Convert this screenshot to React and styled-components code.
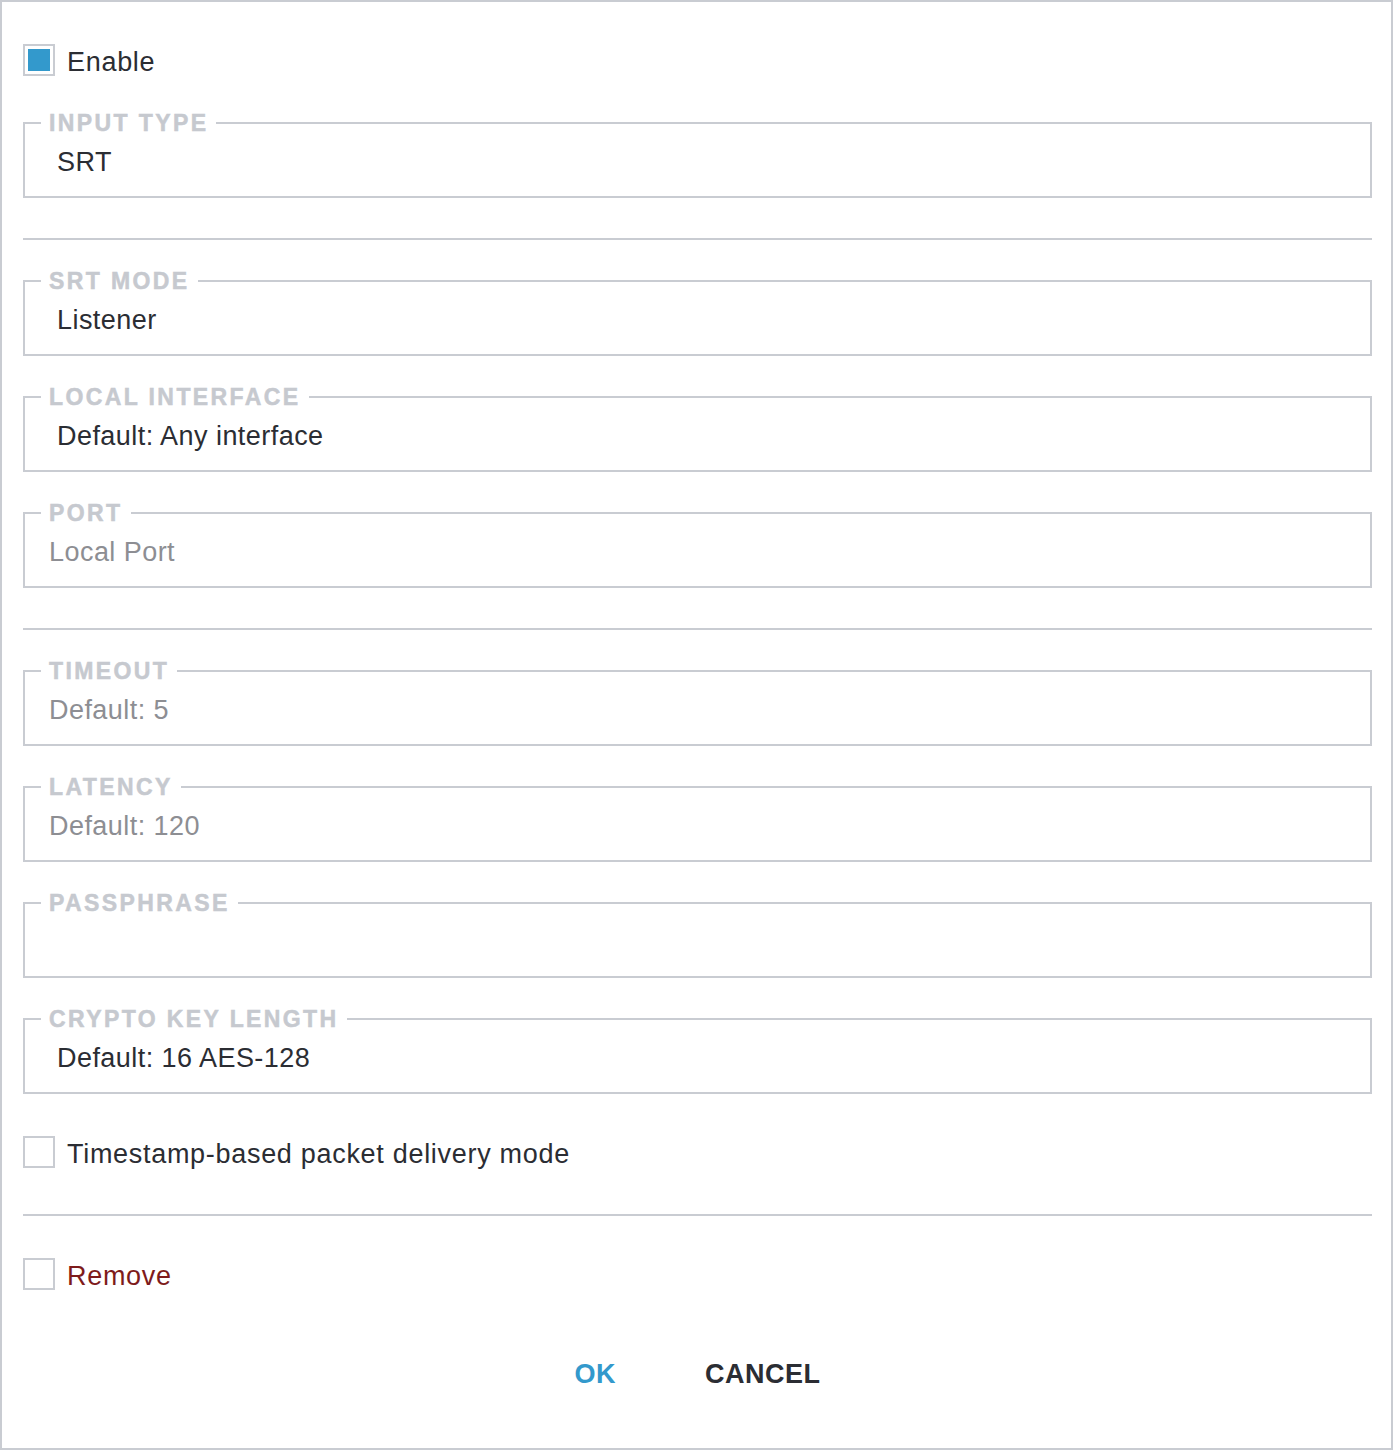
import React from 'react';
import styled, { createGlobalStyle } from 'styled-components';

const Global = createGlobalStyle`
  html, body { margin: 0; padding: 0; background: #fff; }
  body { font-family: "Liberation Sans", Arial, Helvetica, sans-serif; }
  * { box-sizing: border-box; }
`;

const LINE = '#c9ccd2';

const Frame = styled.div`
  width: 1393px;
  height: 1450px;
  border: 2px solid ${LINE};
  padding: 42px 19px 0 21px;
  display: flex;
  flex-direction: column;
  background: #fff;
`;

const CheckRow = styled.label`
  display: flex;
  align-items: center;
  gap: 12px;
  height: 32px;
  margin-top: ${(p) => p.$mt || 0}px;
  font-size: 27px;
  line-height: 32px;
  letter-spacing: 0.7px;
  color: ${(p) => (p.$danger ? '#7e1b1b' : '#2b2d33')};
  cursor: pointer;
`;

const CheckText = styled.span`
  margin-top: 4px;
  white-space: nowrap;
`;

const Box = styled.span`
  flex: none;
  display: flex;
  width: 32px;
  height: 32px;
  border: 2px solid ${LINE};
  padding: 3px;
  background: #fff;
  &::after {
    content: '';
    flex: 1;
    background: ${(p) => (p.$checked ? '#3399cc' : 'transparent')};
  }
`;

const Field = styled.fieldset`
  margin: ${(p) => p.$mt || 0}px 0 0;
  padding: 12px 0 18px;
  border: 2px solid ${LINE};
  min-width: 0;
`;

const Legend = styled.legend`
  margin-left: 16px;
  padding: 0 8px;
  font-size: 23px;
  line-height: 22px;
  font-weight: 700;
  letter-spacing: 2.4px;
  text-transform: uppercase;
  color: #c6c9cf;
  -webkit-text-stroke: 0.5px #c6c9cf;
`;

const Value = styled.div`
  height: 32px;
  padding-left: ${(p) => (p.$input ? 24 : 32)}px;
  font-size: 27px;
  line-height: 32px;
  letter-spacing: 0.45px;
  color: ${(p) => (p.$placeholder ? '#8d8e93' : '#2b2d33')};
  white-space: nowrap;
`;

const Divider = styled.hr`
  margin: ${(p) => p.$mt || 0}px 0 0;
  border: 0;
  height: 2px;
  background: ${LINE};
  flex: none;
`;

const Actions = styled.div`
  display: flex;
  justify-content: center;
  gap: 89px;
  margin-top: 68px;
`;

const ActionButton = styled.button`
  background: none;
  border: 0;
  padding: 0;
  font-family: inherit;
  font-size: 27px;
  line-height: 32px;
  font-weight: 700;
  letter-spacing: 0.5px;
  color: ${(p) => (p.$primary ? '#3399cc' : '#2b2d33')};
  cursor: pointer;
`;

const FieldBox = ({ label, value, input, placeholder, mt = 30 }) => (
  <Field $mt={mt}>
    <Legend>{label}</Legend>
    <Value $input={input} $placeholder={placeholder}>{value}</Value>
  </Field>
);

const Check = ({ checked, danger, mt, children }) => (
  <CheckRow $mt={mt} $danger={danger}>
    <Box $checked={checked} />
    <CheckText>{children}</CheckText>
  </CheckRow>
);

export default function App() {
  return (
    <>
      <Global />
      <Frame>
        <Check checked>Enable</Check>
        <FieldBox mt={36} label="Input Type" value="SRT" />
        <Divider $mt={40} />
        <FieldBox label="SRT Mode" value="Listener" />
        <FieldBox label="Local Interface" value="Default: Any interface" />
        <FieldBox label="Port" value="Local Port" input placeholder />
        <Divider $mt={40} />
        <FieldBox label="Timeout" value="Default: 5" input placeholder />
        <FieldBox label="Latency" value="Default: 120" input placeholder />
        <FieldBox label="Passphrase" value="" input placeholder />
        <FieldBox label="Crypto Key Length" value="Default: 16 AES-128" />
        <Check mt={42}>Timestamp-based packet delivery mode</Check>
        <Divider $mt={46} />
        <Check mt={42} danger>Remove</Check>
        <Actions>
          <ActionButton $primary>OK</ActionButton>
          <ActionButton>CANCEL</ActionButton>
        </Actions>
      </Frame>
    </>
  );
}
